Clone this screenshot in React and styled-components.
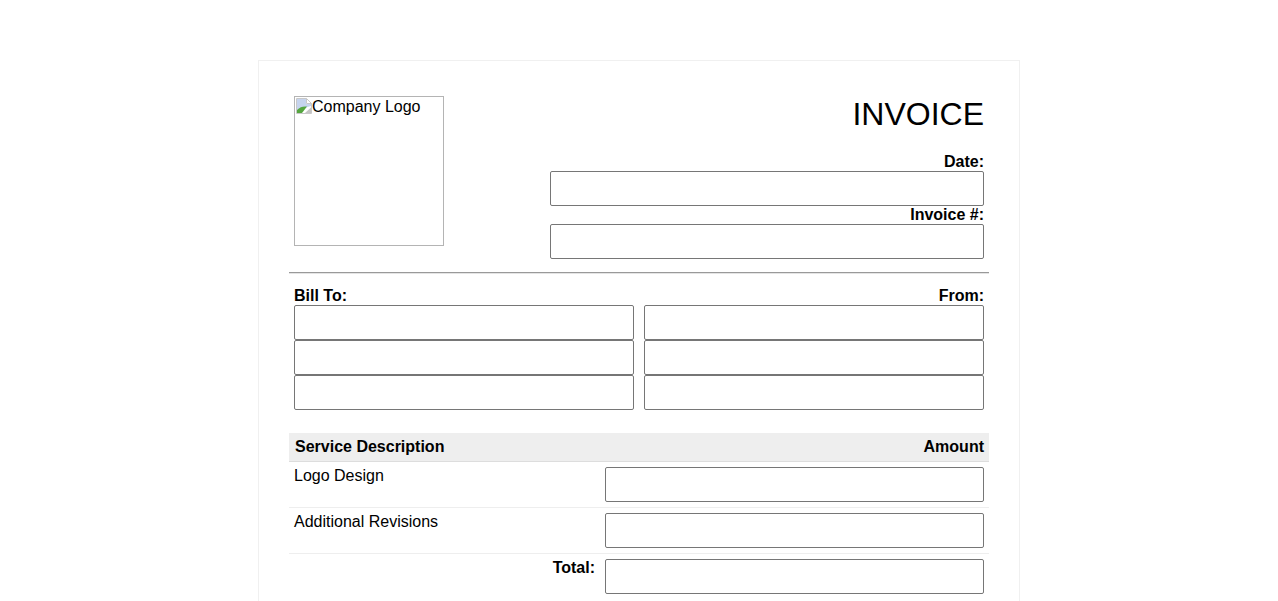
import React from 'react';
import styled, { createGlobalStyle } from 'styled-components';

function BrokenImageIcon() {
  return (
    <svg width="16" height="16" viewBox="0 0 16 16">
      <path d="M0.5 0.5H10.5L15.5 5.5V15.5H0.5Z" fill="#fff" stroke="#c8c8c8" />
      <path d="M1 1H10V6H15V8L10 9.5L4 13L1 15Z" fill="#c6d4ee" />
      <path d="M10.5 0.5L15.5 5.5H10.5Z" fill="#fff" stroke="#c8c8c8" />
      <path d="M1 15V12C4 9 7 8 11 8.5L6 15Z" fill="#55a63f" />
      <path d="M9 15L15 9.5V15Z" fill="#c4c4c4" />
    </svg>
  );
}

export default function App() {
  return (
    <>
      <GlobalStyle />
      <Paper>
        <Header>
          <LogoBox>
            <IconWrap><BrokenImageIcon /></IconWrap>
            Company Logo
          </LogoBox>
          <Meta>
            <Title>INVOICE</Title>
            <Label $right>Date:</Label>
            <Field />
            <Label $right>Invoice #:</Label>
            <Field />
          </Meta>
        </Header>
        <Rule />
        <Parties>
          <Party>
            <Label>Bill To:</Label>
            <Field />
            <Field />
            <Field />
          </Party>
          <Party>
            <Label $right>From:</Label>
            <Field />
            <Field />
            <Field />
          </Party>
        </Parties>
        <TableHead>
          <span>Service Description</span>
          <span>Amount</span>
        </TableHead>
        <Row>
          <Description>Logo Design</Description>
          <AmountField />
        </Row>
        <Row>
          <Description>Additional Revisions</Description>
          <AmountField />
        </Row>
        <Row $last>
          <TotalLabel>Total:</TotalLabel>
          <AmountField />
        </Row>
      </Paper>
    </>
  );
}

const GlobalStyle = createGlobalStyle`
html, body {
  margin: 0;
  padding: 0;
  background: #fff;
  overflow: hidden;
}
body {
  font-family: "Liberation Sans", Arial, sans-serif;
  font-size: 16px;
  color: #000;
}
`;

const Paper = styled.div`
  box-sizing: border-box;
  width: 762px;
  margin: 60px auto 0;
  padding: 35px 30px 30px;
  border: 1px solid #f0f0f0;
`;

const Header = styled.div`
  display: flex;
  justify-content: space-between;
  padding: 0 5px;
`;

const LogoBox = styled.div`
  box-sizing: border-box;
  width: 150px;
  height: 150px;
  border: 1px solid #b4b4b4;
  line-height: 18px;
  padding: 1px;
`;

const IconWrap = styled.span`
  display: inline-block;
  width: 16px;
  height: 16px;
  vertical-align: -2px;
  svg {
    display: block;
  }
`;

const Meta = styled.div`
  width: 434px;
  display: flex;
  flex-direction: column;
`;

const Title = styled.div`
  font-size: 32px;
  line-height: 36px;
  height: 57px;
  text-align: right;
`;

const Label = styled.div`
  font-weight: 700;
  line-height: 18px;
  height: 18px;
  text-align: ${(p) => (p.$right ? 'right' : 'left')};
`;

const Field = styled.input`
  display: block;
  box-sizing: border-box;
  width: 100%;
  height: 35px;
  margin: 0;
  padding: 1px 2px;
  border: 1px solid #767676;
  border-radius: 2px;
  background: #fff;
`;

const Rule = styled.div`
  height: 1px;
  margin: 13px 0 13px;
  background: #999;
  box-shadow: 0 1px 0 #e4e4e4;
`;

const Parties = styled.div`
  display: grid;
  grid-template-columns: 340px 340px;
  column-gap: 10px;
  padding: 0 5px;
  margin-bottom: 23px;
`;

const Party = styled.div`
  display: flex;
  flex-direction: column;
  ${Label} {
    height: 19px;
    line-height: 20px;
  }
`;

const TableHead = styled.div`
  display: flex;
  justify-content: space-between;
  box-sizing: border-box;
  height: 29px;
  padding: 0 5px 0 6px;
  line-height: 27px;
  font-weight: 700;
  background: #eee;
  border-bottom: 1px solid #ddd;
`;

const Row = styled.div`
  display: flex;
  justify-content: space-between;
  box-sizing: border-box;
  height: 46px;
  padding: 5px 5px 0;
  border-bottom: 1px solid ${(p) => (p.$last ? 'transparent' : '#eee')};
`;

const Description = styled.div`
  line-height: 18px;
`;

const TotalLabel = styled.div`
  width: 311px;
  padding-right: 10px;
  box-sizing: border-box;
  line-height: 18px;
  font-weight: 700;
  text-align: right;
`;

const AmountField = styled(Field)`
  width: 379px;
  flex: none;
`;
